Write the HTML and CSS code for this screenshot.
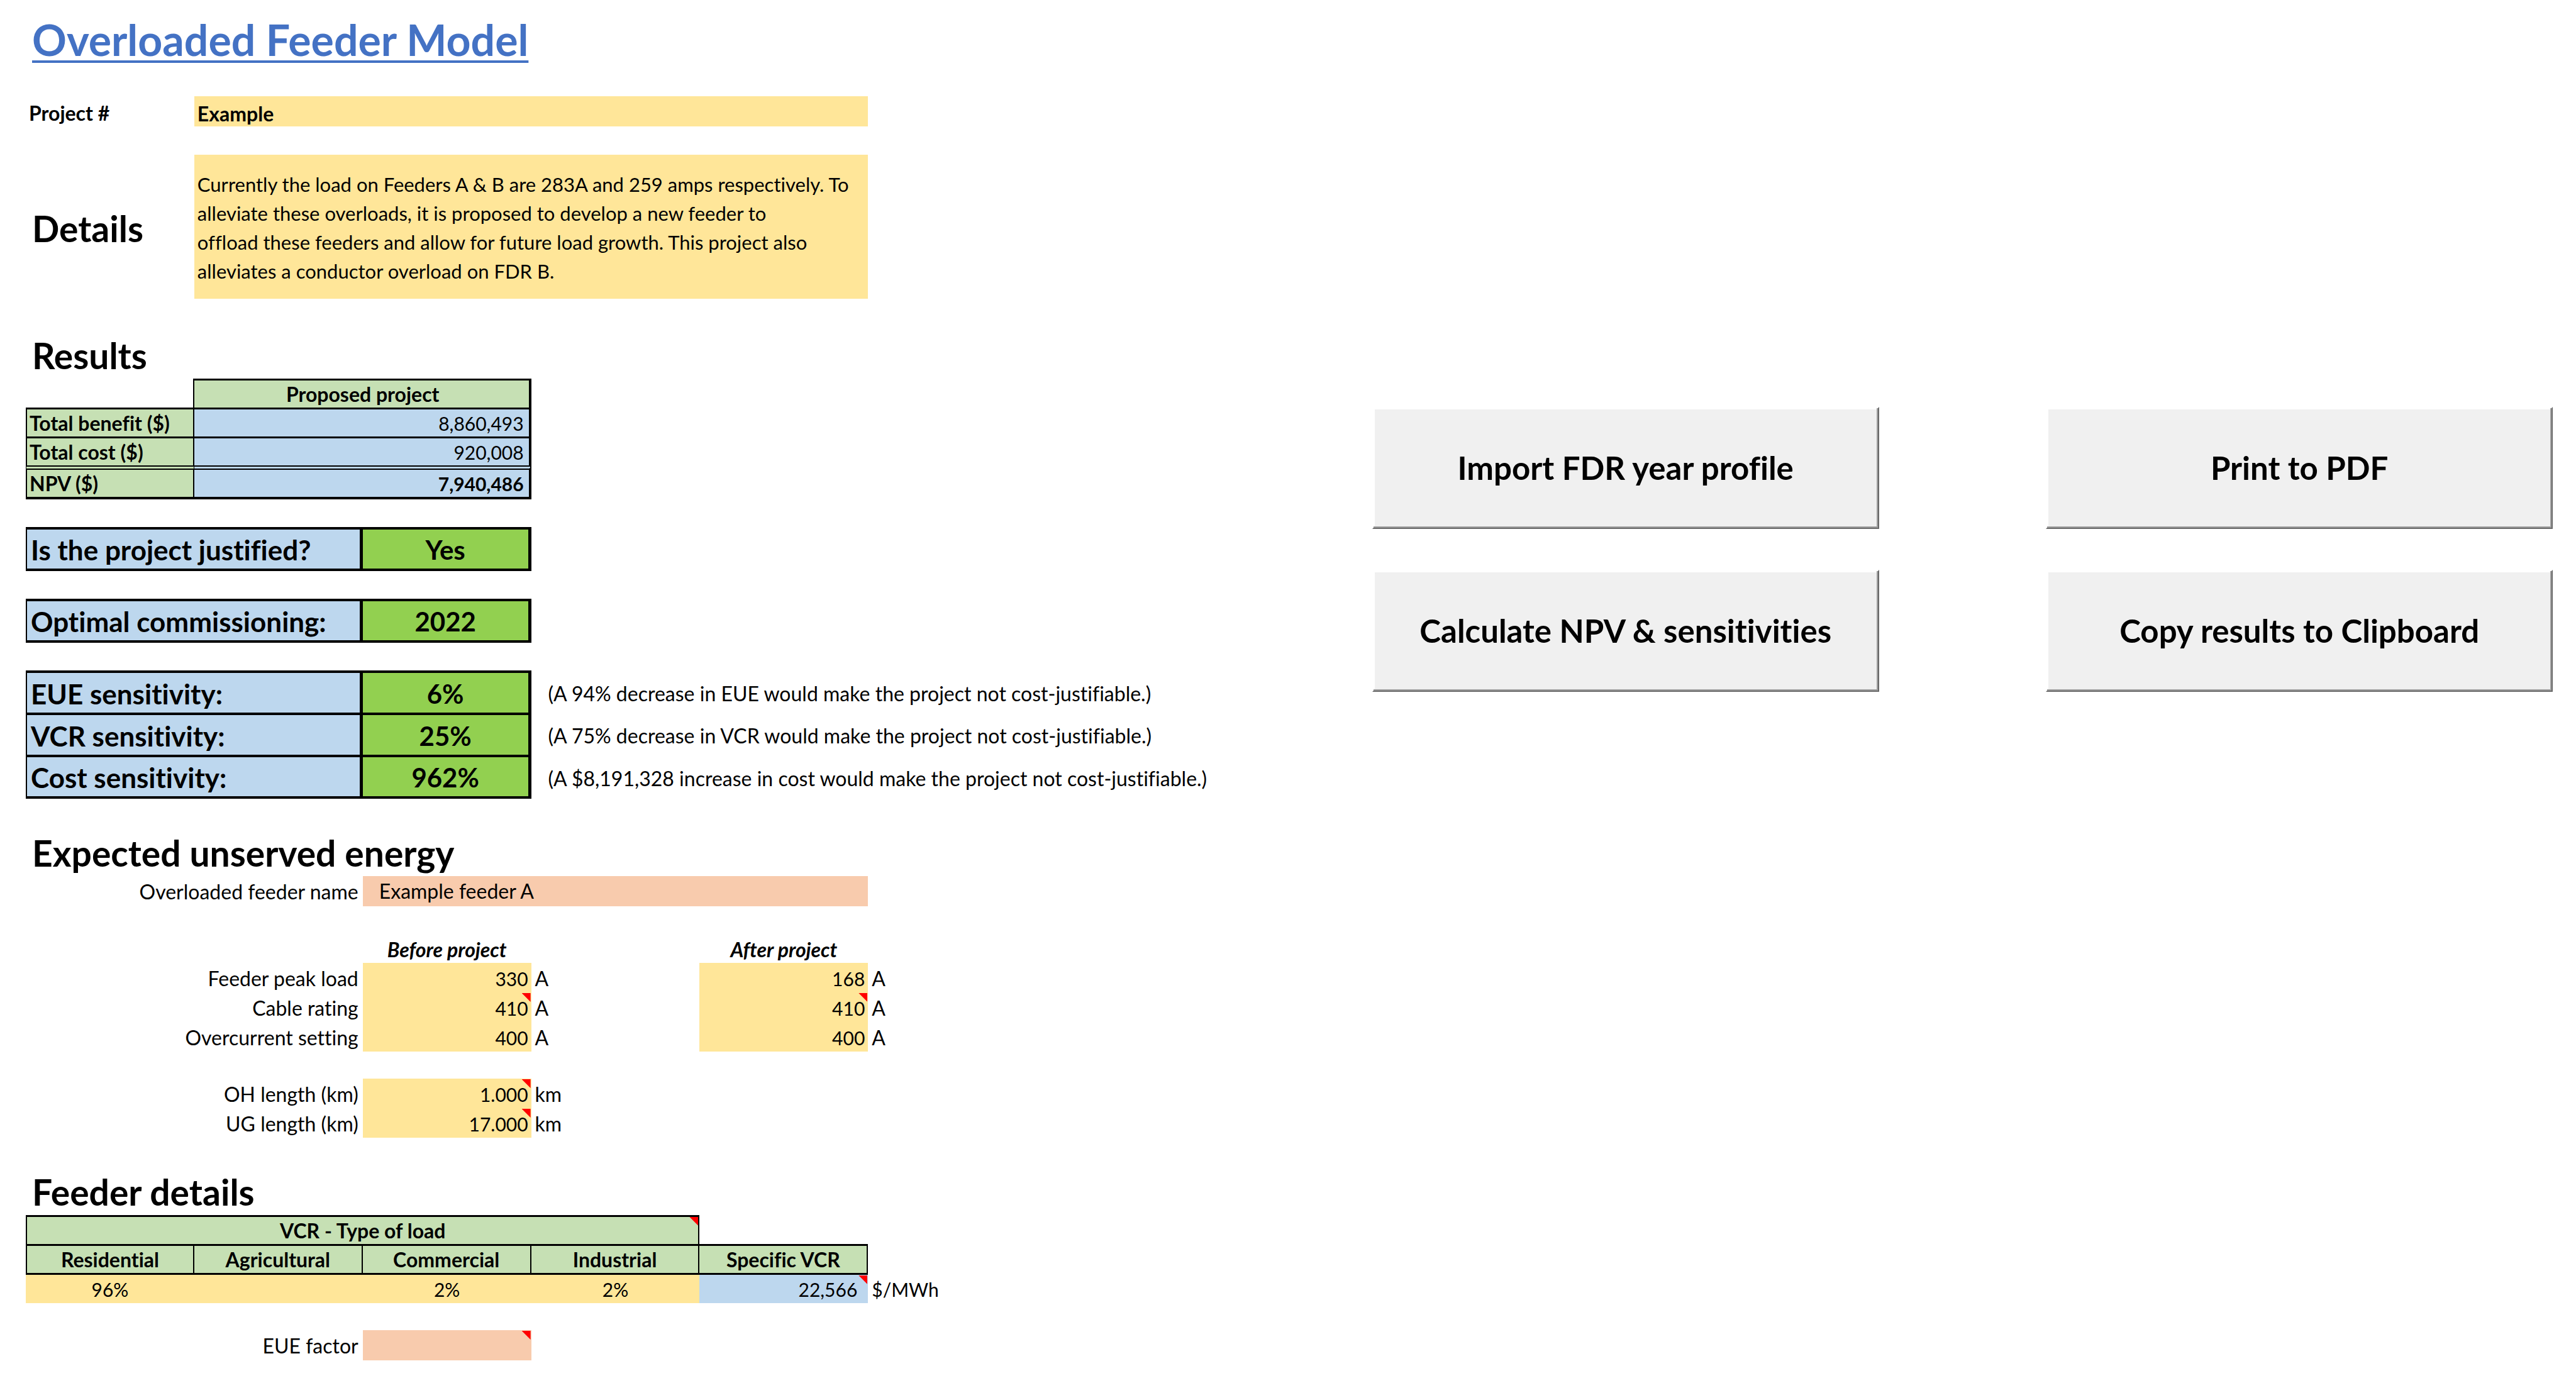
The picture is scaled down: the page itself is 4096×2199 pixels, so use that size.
FILE: index.html
```html
<!DOCTYPE html>
<html lang="en">
<head>
<meta charset="utf-8">
<title>Overloaded Feeder Model</title>
<link rel="stylesheet" href="styles.css">
</head>
<body>
<main class="page">
  <div class="sheet">
    <h1 class="title">Overloaded Feeder Model</h1>

    <div class="row project">
      <label class="project-label" for="project">Project #</label>
      <input class="field wide strong" id="project" type="text" value="Example">
    </div>
    <div class="row details">
      <label class="details-label" for="details">Details</label>
      <textarea class="field wide" id="details">Currently the load on Feeders A &amp; B are 283A and 259 amps respectively. To
alleviate these overloads, it is proposed to develop a new feeder to
offload these feeders and allow for future load growth. This project also
alleviates a conductor overload on FDR B.</textarea>
    </div>

    <h2 class="heading">Results</h2>
    <div class="row">
      <table class="results">
        <colgroup><col class="third"><col></colgroup>
        <tr><td class="blank"></td><th class="top" scope="col">Proposed project</th></tr>
        <tr><th scope="row">Total benefit ($)</th><td>8,860,493</td></tr>
        <tr><th scope="row">Total cost ($)</th><td>920,008</td></tr>
        <tr class="total"><th scope="row">NPV ($)</th><td>7,940,486</td></tr>
      </table>
    </div>

    <table class="answers">
      <tr><th scope="row">Is the project justified?</th><td class="answer">Yes</td><td></td></tr>
    </table>
    <table class="answers">
      <tr><th scope="row">Optimal commissioning:</th><td class="answer">2022</td><td></td></tr>
    </table>
    <table class="answers">
      <tr><th scope="row">EUE sensitivity:</th><td class="answer">6%</td><td class="remark">(A 94% decrease in EUE would make the project not cost-justifiable.)</td></tr>
      <tr><th scope="row">VCR sensitivity:</th><td class="answer">25%</td><td class="remark">(A 75% decrease in VCR would make the project not cost-justifiable.)</td></tr>
      <tr><th scope="row">Cost sensitivity:</th><td class="answer">962%</td><td class="remark">(A $8,191,328 increase in cost would make the project not cost-justifiable.)</td></tr>
    </table>

    <h2 class="heading">Expected unserved energy</h2>
    <div class="row tall">
      <label class="label" for="feeder">Overloaded feeder name</label>
      <input class="field feeder" id="feeder" type="text" value="Example feeder A">
    </div>

    <div class="row stages">
      <span class="before">Before project</span>
      <span class="after">After project</span>
    </div>
    <div class="row">
      <label class="label" for="peak">Feeder peak load</label>
      <div class="cell"><input class="field number" id="peak" type="text" value="330"></div>
      <span class="unit">A</span>
      <div class="cell"><input class="field number" type="text" value="168" aria-label="Feeder peak load after project"></div>
      <span class="unit">A</span>
    </div>
    <div class="row">
      <label class="label" for="cable">Cable rating</label>
      <div class="cell note"><input class="field number" id="cable" type="text" value="410"></div>
      <span class="unit">A</span>
      <div class="cell note"><input class="field number" type="text" value="410" aria-label="Cable rating after project"></div>
      <span class="unit">A</span>
    </div>
    <div class="row">
      <label class="label" for="overcurrent">Overcurrent setting</label>
      <div class="cell"><input class="field number" id="overcurrent" type="text" value="400"></div>
      <span class="unit">A</span>
      <div class="cell"><input class="field number" type="text" value="400" aria-label="Overcurrent setting after project"></div>
      <span class="unit">A</span>
    </div>

    <div class="row spaced">
      <label class="label" for="oh">OH length (km)</label>
      <div class="cell note"><input class="field number" id="oh" type="text" value="1.000"></div>
      <span class="unit">km</span>
    </div>
    <div class="row">
      <label class="label" for="ug">UG length (km)</label>
      <div class="cell note"><input class="field number" id="ug" type="text" value="17.000"></div>
      <span class="unit">km</span>
    </div>

    <h2 class="heading">Feeder details</h2>
    <div class="row">
      <table class="loads">
        <tr><th class="first note" colspan="4" scope="colgroup">VCR - Type of load</th><td></td><td></td></tr>
        <tr>
          <th class="first" scope="col">Residential</th>
          <th scope="col">Agricultural</th>
          <th scope="col">Commercial</th>
          <th scope="col">Industrial</th>
          <th scope="col">Specific VCR</th>
          <td></td>
        </tr>
        <tr class="shares">
          <td><input class="field share" type="text" value="96%" aria-label="Residential share"></td>
          <td><input class="field share" type="text" value="" aria-label="Agricultural share"></td>
          <td><input class="field share" type="text" value="2%" aria-label="Commercial share"></td>
          <td><input class="field share" type="text" value="2%" aria-label="Industrial share"></td>
          <td class="specific note">22,566</td>
          <td class="per">$/MWh</td>
        </tr>
      </table>
    </div>

    <div class="row tall spaced">
      <label class="label" for="factor">EUE factor</label>
      <div class="cell note"><input class="field factor" id="factor" type="text" value=""></div>
    </div>
  </div>

  <div class="actions">
    <button class="action" type="button">Import FDR year profile</button>
    <button class="action second" type="button">Print to PDF</button>
    <button class="action" type="button">Calculate NPV &amp; sensitivities</button>
    <button class="action second" type="button">Copy results to Clipboard</button>
  </div>
</main>
</body>
</html>
```
FILE: styles.css
```css
* {
  box-sizing: border-box;
}

body {
  margin: 0;
  background: #fff;
  color: #000;
  font: 32px/36px Lato, sans-serif;
  font-variant-ligatures: none;
}

/* Fifteen equal sheet columns: eight for the model, seven for the buttons */
.page {
  display: grid;
  grid-template-columns: repeat(15, minmax(0, 1fr));
  align-items: start;
  padding: 0 37px 0 41px;
}

.sheet {
  grid-column: span 8;
}

.row {
  display: grid;
  grid-template-columns: repeat(8, minmax(0, 1fr));
  grid-auto-rows: minmax(47px, auto);
}

.tall {
  grid-auto-rows: 48px;
}

.spaced {
  margin-top: 43px;
}

/* Headings */
.title {
  margin: 0;
  height: 153px;
  padding: 24px 0 0 10px;
  color: #4472c4;
  font-size: 68px;
  line-height: 78px;
  text-decoration: underline;
  text-decoration-thickness: 4px;
  text-decoration-skip-ink: none;
  text-underline-offset: 7px;
}

.heading {
  display: flex;
  align-items: flex-end;
  height: 123px;
  margin: 0;
  padding: 0 0 5px 10px;
  font-size: 57px;
  line-height: 64px;
}

/* Input cells */
.field {
  display: block;
  width: 100%;
  height: 100%;
  margin: 0;
  padding: 0 5px;
  border: 0;
  border-radius: 0;
  outline: 0;
  background: #ffe699;
  color: inherit;
  font: inherit;
  font-variant-ligatures: none;
  resize: none;
}

.wide {
  grid-column: span 4;
}

.strong {
  padding-top: 6px;
  font-weight: 700;
}

.number {
  padding-top: 2px;
  font-size: 30px;
  text-align: right;
}

.share {
  height: 45px;
  padding: 0;
  font-size: 30px;
  text-align: center;
}

.feeder {
  grid-column: span 3;
  padding: 0 26px 2px;
  background: #f8cbad;
}

.factor {
  background: #f8cbad;
}

.cell,
.note {
  position: relative;
}

/* Red comment corner */
.note::after {
  content: "";
  position: absolute;
  top: 1px;
  right: 1px;
  width: 14px;
  height: 14px;
  background: #f00;
  clip-path: polygon(0 0, 100% 0, 100% 100%);
}

.label,
.unit {
  align-self: center;
  padding-top: 2px;
}

.label {
  grid-column: span 2;
  padding-right: 7px;
  text-align: right;
}

.unit {
  padding-left: 6px;
}

/* Project description */
.project {
  grid-auto-rows: 48px;
}

.project-label {
  align-self: center;
  padding: 6px 0 0 5px;
  font-weight: 700;
}

.details {
  grid-auto-rows: 229px;
  margin: 45px 0 4px;
}

.details-label {
  align-self: center;
  padding: 4px 0 0 10px;
  font-size: 57px;
  font-weight: 700;
  line-height: 64px;
}

.details .field {
  padding-top: 24px;
  font-size: 31px;
  line-height: 46px;
  white-space: pre;
  overflow: hidden;
}

.stages {
  grid-auto-rows: 46px;
  align-items: end;
  margin-top: 44px;
  font-style: italic;
  font-weight: 700;
  text-align: center;
}

.before {
  grid-column: 3;
}

.after {
  grid-column: 5;
}

.before,
.after {
  line-height: 42px;
}

/* Tables */
table {
  width: 100%;
  table-layout: fixed;
  border-spacing: 0;
}

th,
td {
  padding: 0;
}

.results {
  grid-column: span 3;
}

.third {
  width: 33.33%;
}

.results th,
.results td {
  height: 46px;
  border-top: 3px solid #000;
}

.results th {
  padding-left: 4px;
  border-left: 2px solid #000;
  border-right: 2px solid #000;
  background: #c6e0b4;
  text-align: left;
}

.results td {
  padding-right: 8px;
  border-right: 4px solid #000;
  background: #bdd7ee;
  font-size: 30px;
  text-align: right;
}

.results .blank {
  border: 0;
  border-right: 2px solid #000;
  background: none;
}

.results .top {
  border-left: 0;
  border-right-width: 4px;
  text-align: center;
}

.results .total th,
.results .total td {
  height: 54px;
  border-top: 7px double #000;
  border-bottom: 4px solid #000;
  font-weight: 700;
}

.answers {
  margin-top: 44px;
}

.answers th,
.answers td {
  width: 12.5%;
  height: 67px;
  padding-top: 2px;
}

.answers th,
.answers .answer {
  border-top: 4px solid #000;
  font-size: 44px;
  font-weight: 700;
  line-height: 48px;
}

.answers th {
  width: 25%;
  padding-left: 6px;
  border-left: 2px solid #000;
  border-right: 5px solid #000;
  background: #bdd7ee;
  text-align: left;
}

.answers .answer {
  border-right: 5px solid #000;
  background: #92d050;
  font-size: 42px;
  text-align: center;
}

.answers tr:last-child th,
.answers tr:last-child .answer {
  height: 70px;
  border-bottom: 4px solid #000;
}

.answers td:last-child {
  width: 62.5%;
  padding: 6px 0 0 27px;
}

.loads {
  grid-column: span 6;
}

.loads th {
  height: 46px;
  border-top: 3px solid #000;
  border-right: 2px solid #000;
  background: #c6e0b4;
}

.loads .first {
  border-left: 2px solid #000;
}

.loads th.note::after {
  top: 0;
  right: 0;
}

.shares td {
  height: 48px;
  border-top: 3px solid #000;
}

.shares .specific {
  padding-right: 17px;
  background: #bdd7ee;
  font-size: 30px;
  text-align: right;
}

.shares .per {
  padding: 3px 0 0 6px;
  border: 0;
  font-size: 30px;
}

/* Raised buttons, three sheet columns wide with one column between */
.actions {
  grid-column: span 7;
  display: grid;
  grid-template-columns: repeat(7, minmax(0, 1fr));
  grid-auto-rows: 194px;
  row-gap: 65px;
  padding-top: 647px;
}

.action {
  grid-column: 1 / span 3;
  margin: 0 0 0 -2px;
  padding: 0;
  border: 2px solid;
  border-color: #fff #696969 #696969 #fff;
  background: #f0f0f0;
  box-shadow: inset -2px -2px #a0a0a0, inset 2px 2px #fff;
  color: inherit;
  font: 700 51px/58px Lato, sans-serif;
  font-variant-ligatures: none;
}

.second {
  grid-column: 5 / span 3;
}
```
